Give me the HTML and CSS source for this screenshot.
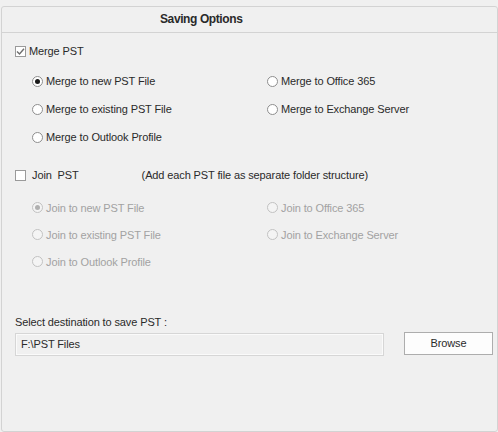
FILE: index.html
```html
<!DOCTYPE html>
<html>
<head>
<meta charset="utf-8">
<link rel="stylesheet" href="styles.css">
</head>
<body>
<div class="panel">
  <div class="header">Saving Options</div>
  <div class="content">
    <div class="check-row merge">
      <span class="checkbox"><svg width="9" height="9" viewBox="0 0 9 9"><path d="M1 4.5 L3.5 7 L8 1.8" fill="none" stroke="#6e6e6e" stroke-width="1.4"/></svg></span>
      <span class="label">Merge PST</span>
    </div>
    <div class="radio-grid merge-grid">
      <div class="radio-item"><span class="radio on"></span><span class="label">Merge to new PST File</span></div>
      <div class="radio-item"><span class="radio"></span><span class="label">Merge to Office 365</span></div>
      <div class="radio-item"><span class="radio"></span><span class="label">Merge to existing PST File</span></div>
      <div class="radio-item"><span class="radio"></span><span class="label">Merge to Exchange Server</span></div>
      <div class="radio-item"><span class="radio"></span><span class="label">Merge to Outlook Profile</span></div>
    </div>
    <div class="check-row join">
      <span class="checkbox"></span>
      <span class="label join-label">Join  PST</span>
      <span class="label note">(Add each PST file as separate folder structure)</span>
    </div>
    <div class="radio-grid join-grid disabled">
      <div class="radio-item"><span class="radio on"></span><span class="label">Join to new PST File</span></div>
      <div class="radio-item"><span class="radio"></span><span class="label">Join to Office 365</span></div>
      <div class="radio-item"><span class="radio"></span><span class="label">Join to existing PST File</span></div>
      <div class="radio-item"><span class="radio"></span><span class="label">Join to Exchange Server</span></div>
      <div class="radio-item"><span class="radio"></span><span class="label">Join to Outlook Profile</span></div>
    </div>
    <div class="dest-label">Select destination to save PST :</div>
    <div class="dest-row">
      <div class="path-box">F:\PST Files</div>
      <div class="browse">Browse</div>
    </div>
  </div>
</div>
</body>
</html>
```
FILE: styles.css
```css
html, body {
  margin: 0;
  padding: 0;
  background: #f0f0f0;
}
body {
  font-family: "Liberation Sans", Arial, sans-serif;
  font-size: 11px;
  letter-spacing: -0.12px;
  color: #2a2a2a;
  width: 498px;
  height: 432px;
  overflow: hidden;
}
.panel {
  margin: 6px 0 0 1px;
  width: 497px;
  height: 426px;
  box-sizing: border-box;
  border: 1px solid #d3d3d3;
  border-radius: 3px;
}
.header {
  height: 25px;
  line-height: 25px;
  border-bottom: 1px solid #d3d3d3;
  padding-left: 158px;
  font-size: 12px;
  font-weight: bold;
  letter-spacing: -0.4px;
  color: #2a2a2a;
}
.content {
  padding-left: 13px;
}
.check-row {
  display: flex;
  align-items: center;
  height: 20px;
}
.merge {
  margin-top: 8px;
}
.join {
  margin-top: 14px;
}
.checkbox {
  width: 11px;
  height: 11px;
  box-sizing: border-box;
  border: 1px solid #9a9a9a;
  background: #fff;
  display: flex;
  align-items: center;
  justify-content: center;
  margin-right: 3px;
  flex: none;
}
.join-label {
  white-space: pre;
  margin-left: 3px;
}
.note {
  margin-left: 63px;
}
.radio-grid {
  display: grid;
  grid-template-columns: 235px 200px;
  padding-left: 17px;
}
.merge-grid {
  margin-top: 6px;
  grid-auto-rows: 28px;
}
.join-grid {
  margin-top: 9px;
  grid-auto-rows: 27px;
}
.radio-item {
  display: flex;
  align-items: center;
}
.radio {
  width: 11px;
  height: 11px;
  box-sizing: border-box;
  border-radius: 50%;
  border: 1px solid #8e8e8e;
  background: #fff;
  margin-right: 3px;
  flex: none;
  display: flex;
  align-items: center;
  justify-content: center;
}
.radio.on::after {
  content: "";
  width: 5px;
  height: 5px;
  border-radius: 50%;
  background: #1a1a1a;
}
.disabled .label {
  color: #a2a2a2;
}
.disabled .radio {
  border-color: #c2c2c2;
  background: #f4f4f4;
}
.disabled .radio.on::after {
  background: #b0b0b0;
}
.dest-label {
  margin-top: 40px;
  height: 14px;
  line-height: 14px;
}
.dest-row {
  display: flex;
  align-items: flex-start;
  margin-top: 4px;
}
.path-box {
  width: 369px;
  height: 23px;
  box-sizing: border-box;
  border: 1px solid #d6d6d6;
  box-shadow: inset 0 0 0 1px #fafafa;
  line-height: 21px;
  padding-left: 5px;
}
.browse {
  margin-left: 20px;
  margin-top: -1px;
  width: 89px;
  height: 23px;
  box-sizing: border-box;
  border: 1px solid #adadad;
  background: #fdfdfd;
  text-align: center;
  line-height: 21px;
}
```
